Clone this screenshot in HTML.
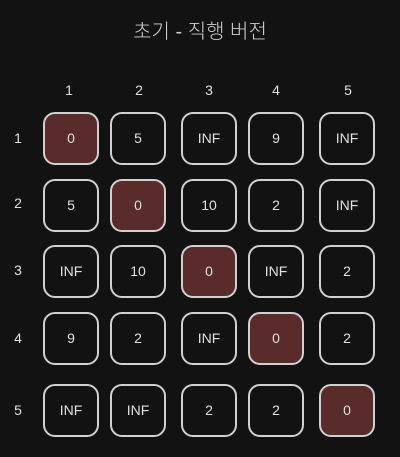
<html><head><style>
body{margin:0;width:400px;height:457px;background:#121212;font-family:"Liberation Sans","Noto Sans CJK KR",sans-serif;color:#e0e0e0;position:relative;overflow:hidden}
.t{position:absolute;left:0;width:400px;top:15px;text-align:center;font-size:20px;color:#d0d0d0;font-weight:300}
.h,.c{position:absolute;text-align:center;font-size:14px}
.c{width:52px;height:49px;border:2px solid #d0d0d0;border-radius:12px;line-height:49px}
.r{background:#5a2b2b}
</style></head><body>
<div class="t">초기 - 직행 버전</div>
<div class="h" style="left:59px;top:82px;width:20px">1</div>
<div class="h" style="left:129px;top:82px;width:20px">2</div>
<div class="h" style="left:199px;top:82px;width:20px">3</div>
<div class="h" style="left:266px;top:82px;width:20px">4</div>
<div class="h" style="left:338px;top:82px;width:20px">5</div>
<div class="h" style="left:8px;top:130px;width:20px">1</div>
<div class="h" style="left:8px;top:195px;width:20px">2</div>
<div class="h" style="left:8px;top:262px;width:20px">3</div>
<div class="h" style="left:8px;top:330px;width:20px">4</div>
<div class="h" style="left:8px;top:402px;width:20px">5</div>

<div class="c r" style="left:43px;top:112px">0</div>
<div class="c" style="left:110px;top:112px">5</div>
<div class="c" style="left:181px;top:112px">INF</div>
<div class="c" style="left:248px;top:112px">9</div>
<div class="c" style="left:319px;top:112px">INF</div>

<div class="c" style="left:43px;top:179px">5</div>
<div class="c r" style="left:110px;top:179px">0</div>
<div class="c" style="left:181px;top:179px">10</div>
<div class="c" style="left:248px;top:179px">2</div>
<div class="c" style="left:319px;top:179px">INF</div>

<div class="c" style="left:43px;top:245px">INF</div>
<div class="c" style="left:110px;top:245px">10</div>
<div class="c r" style="left:181px;top:245px">0</div>
<div class="c" style="left:248px;top:245px">INF</div>
<div class="c" style="left:319px;top:245px">2</div>

<div class="c" style="left:43px;top:312px">9</div>
<div class="c" style="left:110px;top:312px">2</div>
<div class="c" style="left:181px;top:312px">INF</div>
<div class="c r" style="left:248px;top:312px">0</div>
<div class="c" style="left:319px;top:312px">2</div>

<div class="c" style="left:43px;top:384px">INF</div>
<div class="c" style="left:110px;top:384px">INF</div>
<div class="c" style="left:181px;top:384px">2</div>
<div class="c" style="left:248px;top:384px">2</div>
<div class="c r" style="left:319px;top:384px">0</div>
</body></html>
